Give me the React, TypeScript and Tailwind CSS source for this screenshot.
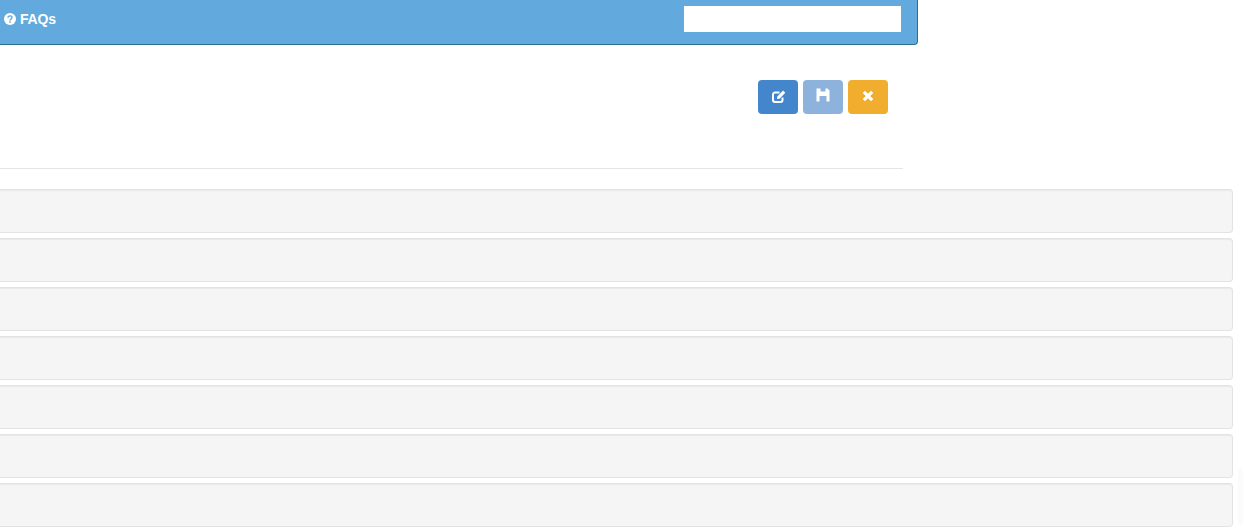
const rows = [0, 1, 2, 3, 4, 5, 6];

function EditIcon() {
  return (
    <svg width="15" height="15" viewBox="0 0 15 15" fill="none" stroke="white">
      <path d="M11.5 8.5v2.6a2 2 0 0 1-2 2H4a2 2 0 0 1-2-2V5.6a2 2 0 0 1 2-2h4.5" strokeWidth="2" />
      <path d="M6 10l.3-2.6 5.8-5.8 2.2 2.2-5.8 5.9z" fill="white" stroke="none" />
    </svg>
  );
}

function SaveIcon() {
  return (
    <svg width="14" height="14" viewBox="0 0 14 14" fill="white">
      <path fillRule="evenodd" d="M.5.5h11l2 2v11H.5zM4.5.5v3h5v-3zM3.5 8v5.5h7V8z" />
    </svg>
  );
}

function CloseIcon() {
  return (
    <svg width="12" height="12" viewBox="0 0 12 12" fill="none" stroke="white" strokeWidth="3.2">
      <path d="M1.8 1.8l8.4 8.4M10.2 1.8l-8.4 8.4" />
    </svg>
  );
}

function HelpIcon() {
  return (
    <svg width="12" height="12" viewBox="0 0 12 12">
      <circle cx="6" cy="6" r="6" fill="white" />
      <path d="M4 4.7c0-1.2 1-1.8 2-1.8s2 .6 2 1.7c0 1.5-2 1.4-2 2.8" fill="none" stroke="#62aadd" strokeWidth="1.4" />
      <rect x="5.2" y="8.3" width="1.6" height="1.5" fill="#62aadd" />
    </svg>
  );
}

export default function App() {
  return (
    <div className="relative h-[530px] w-[1244px] overflow-hidden bg-white font-['Liberation_Sans',sans-serif]">
      <div className="flex h-[45px] w-[918px] items-start justify-between rounded-br-[4px] border-r border-b border-[#2d6f8e] bg-[#62aadd] pt-[6px] pr-4 pl-1">
        <a className="flex h-[26px] items-center gap-1 text-[14px] font-bold tracking-[-0.2px] text-white">
          <HelpIcon />
          FAQs
        </a>
        <input className="h-[26px] w-[217px] bg-white" aria-label="Search" />
      </div>
      <div className="flex w-[888px] justify-end gap-[5px] pt-[35px]">
        <button type="button" className="flex h-[34px] w-10 items-center justify-center rounded-[4px] bg-[#4486cc] pb-0.5 text-white">
          <EditIcon />
        </button>
        <button type="button" className="flex h-[34px] w-10 items-center justify-center rounded-[4px] bg-[#8db3dd] pb-1 text-white">
          <SaveIcon />
        </button>
        <button type="button" className="flex h-[34px] w-10 items-center justify-center rounded-[4px] bg-[#f0ad2e] pb-0.5 text-white">
          <CloseIcon />
        </button>
      </div>
      <hr className="mt-[54px] w-[903px] border-t border-[#e6e6e6]" />
      <div className="mt-5 flex w-[1233px] flex-col gap-[5px]">
        {rows.map((row) => (
          <div
            key={row}
            className="h-11 rounded-r-[4px] border border-l-0 border-[#e3e3e3] bg-[#f5f5f5] shadow-[inset_0_1px_1px_rgba(0,0,0,0.05)]"
          />
        ))}
      </div>
      <div className="absolute top-[468px] right-[1px] h-[56px] w-[5px] rounded-full bg-[#fbfbfb]" />
    </div>
  );
}
